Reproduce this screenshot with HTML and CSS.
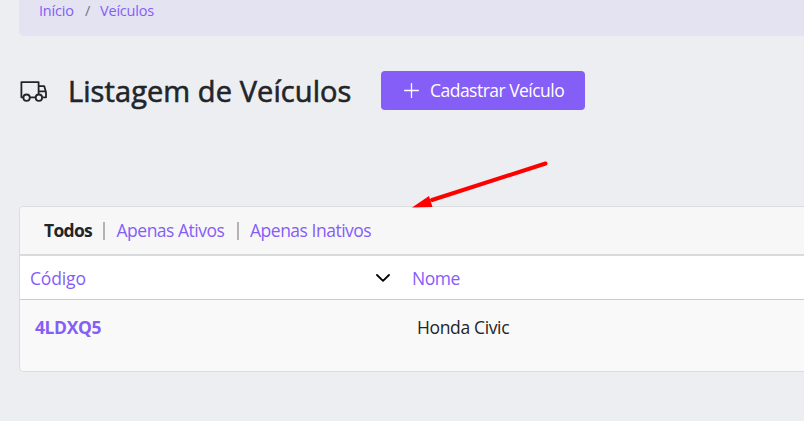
FILE: index.html
```html
<!DOCTYPE html>
<html lang="pt-BR">
<head>
<meta charset="utf-8">
<title>Listagem de Veículos</title>
<link rel="stylesheet" href="styles.css">
</head>
<body>
<nav class="breadcrumb"><a class="crumb-home">Início</a><span class="slash">/</span><a class="crumb-current">Veículos</a></nav>
<header class="page-header">
  <svg class="truck" viewBox="0 0 28 22" fill="none" stroke="#212529" stroke-width="1.8" stroke-linejoin="round">
    <path d="M3.4 17.3H1.4V2.1H18.6V16.5M9.6 17.3H15.8M18.6 6.1H24.2L26 12.3V17.3H22.4M18.6 11.3H25.6"/>
    <circle cx="6.6" cy="17.7" r="3.2"/><circle cx="18.9" cy="17.7" r="3.2" fill="#edeef2"/>
  </svg>
  <h1>Listagem de Veículos</h1>
  <a class="button"><svg class="plus" viewBox="0 0 15 15" stroke="#fff" stroke-width="1.3" stroke-linecap="round"><path d="M7.5 .6V14.4M.6 7.5H14.4"/></svg><span class="button-label">Cadastrar Veículo</span></a>
</header>
<main class="card">
  <div class="filters"><b class="all">Todos</b><i class="bar"></i><a class="active-only">Apenas Ativos</a><i class="bar"></i><a class="inactive-only">Apenas Inativos</a></div>
  <div class="row head">
    <div class="cell"><a class="code-label">Código</a><svg class="chevron" viewBox="0 0 14 8" fill="none" stroke="#000" stroke-width="1.8" stroke-linecap="round" stroke-linejoin="round"><path d="M1 1L7 6.8L13 1"/></svg></div>
    <div class="cell"><a class="name-label">Nome</a></div>
  </div>
  <div class="row data">
    <div class="cell"><a class="code">4LDXQ5</a></div>
    <div class="cell"><span class="name">Honda Civic</span></div>
  </div>
</main>
<svg class="arrow" viewBox="0 0 140 52"><path d="M133.5 5.5L20 42" stroke="#f00" stroke-width="4" stroke-linecap="round"/><path d="M0 49.5L17 38L20.5 49Z" fill="#f00"/></svg>
</body>
</html>
```
FILE: styles.css
```css
* { box-sizing: border-box; }
body {
  margin: 0;
  height: 421px;
  overflow: hidden;
  background: #edeef2;
  color: #212529;
  font: 17.5px/24px "Open Sans", "Noto Sans", sans-serif;
  white-space: nowrap;
}
a { color: #855df7; }
.breadcrumb {
  display: flex;
  height: 36px;
  margin-left: 19px;
  padding: 0 20px;
  border-radius: 0 0 0 5px;
  background: #e4e3f1;
  font-size: 14.5px;
  letter-spacing: -.2px;
  line-height: 21px;
}
.crumb-home { width: 46px; }
.slash { width: 15px; color: #6c757d; }
.page-header {
  display: flex;
  align-items: center;
  height: 39px;
  margin: 35px 0 0 20px;
}
.truck { width: 28px; height: 22px; flex: none; }
h1 {
  width: 313px;
  margin: 0 0 0 20px;
  font-size: 29px;
  line-height: 39px;
  font-weight: 500;
  letter-spacing: .08px;
  -webkit-text-stroke: .6px #212529;
}
.button {
  display: flex;
  align-items: center;
  width: 204px;
  height: 39px;
  padding-left: 23px;
  border-radius: 4px;
  background: #855df7;
  color: #fff;
}
.button-label { letter-spacing: -.52px; padding-bottom: 1px; }
.plus { width: 15px; height: 15px; margin-right: 11px; }
.card {
  height: 166px;
  margin: 96px 0 0 19px;
  overflow: hidden;
  border: 1px solid #dcdddf;
  border-right: 0;
  border-radius: 5px 0 0 5px;
  background: #f9f9f9;
}
.filters {
  display: flex;
  align-items: center;
  height: 49px;
  padding-left: 24px;
  border-bottom: 2px solid #d9dadc;
  background: #f7f7f7;
}
.filters a, .filters b { padding-bottom: 1px; letter-spacing: -.49px; }
.filters .all { width: 59px; letter-spacing: -.7px; color: #212529; }
.bar { width: 2px; height: 18px; margin-right: 11.5px; background: #b3b3b4; }
.active-only { width: 120px; }
.row { display: grid; grid-template-columns: 382px 1fr; }
.head {
  height: 44px;
  padding-left: 10px;
  border-bottom: 1px solid #cbccce;
  background: #fff;
  align-items: center;
}
.head .cell { display: flex; align-items: center; }
.code-label { letter-spacing: -.15px; }
.name-label { letter-spacing: -.5px; }
.chevron { width: 14px; height: 8px; margin-left: auto; margin-right: 22px; }
.data { padding: 15px 0 0 15px; }
.code { font-weight: 700; letter-spacing: -.4px; }
.name { letter-spacing: -.36px; }
.arrow {
  position: absolute;
  left: 412px;
  top: 158px;
  width: 140px;
  height: 52px;
}
```
